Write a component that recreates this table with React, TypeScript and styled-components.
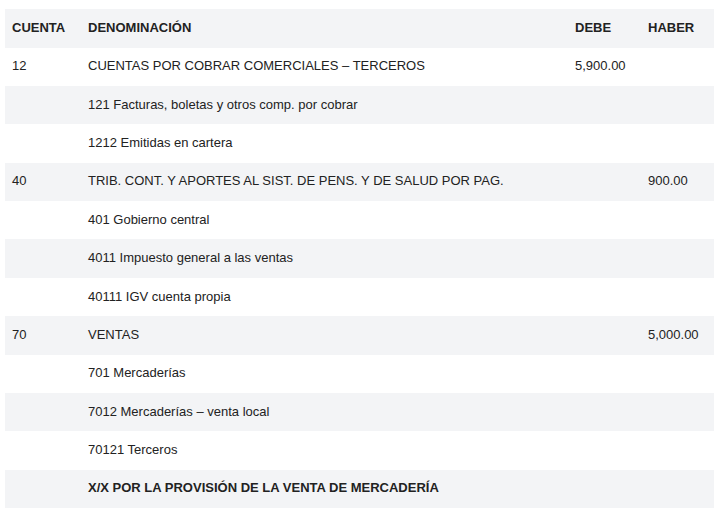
import React from 'react';
import styled, { createGlobalStyle } from 'styled-components';

/**
 * 분개 행 데이터
 */
interface Row {
  cuenta?: string;
  denominacion: string;
  debe?: string;
  haber?: string;
  bold?: boolean;
}

const rows: Row[] = [
  { cuenta: '12', denominacion: 'CUENTAS POR COBRAR COMERCIALES – TERCEROS', debe: '5,900.00' },
  { denominacion: '121 Facturas, boletas y otros comp. por cobrar' },
  { denominacion: '1212 Emitidas en cartera' },
  { cuenta: '40', denominacion: 'TRIB. CONT. Y APORTES AL SIST. DE PENS. Y DE SALUD POR PAG.', haber: '900.00' },
  { denominacion: '401 Gobierno central' },
  { denominacion: '4011 Impuesto general a las ventas' },
  { denominacion: '40111 IGV cuenta propia' },
  { cuenta: '70', denominacion: 'VENTAS', haber: '5,000.00' },
  { denominacion: '701 Mercaderías' },
  { denominacion: '7012 Mercaderías – venta local' },
  { denominacion: '70121 Terceros' },
  { denominacion: 'X/X POR LA PROVISIÓN DE LA VENTA DE MERCADERÍA', bold: true },
];

const App: React.FC = () => {
  return (
    <>
      <GlobalStyle />
      <Page>
        <Table>
          <colgroup>
            <col style={{ width: 76 }} />
            <col />
            <col style={{ width: 73 }} />
            <col style={{ width: 73 }} />
          </colgroup>
          <thead>
            <tr>
              <Th>CUENTA</Th>
              <Th>DENOMINACIÓN</Th>
              <Th>DEBE</Th>
              <Th>HABER</Th>
            </tr>
          </thead>
          <tbody>
            {rows.map((r, i) => (
              <BodyRow key={i}>
                <Td>{r.cuenta}</Td>
                <Td $bold={r.bold}>{r.denominacion}</Td>
                <Td>{r.debe}</Td>
                <Td>{r.haber}</Td>
              </BodyRow>
            ))}
          </tbody>
        </Table>
      </Page>
    </>
  );
};

/* ===================== 스타일 ===================== */

const GlobalStyle = createGlobalStyle`
  body {
    margin: 0;
    background: #ffffff;
    font-family: "Liberation Sans", Arial, sans-serif;
  }
`;

const Page = styled.div`
  padding: 9px 10px 0 5px;
`;

const Table = styled.table`
  width: 709px;
  border-collapse: collapse;
  table-layout: fixed;
  font-size: 13px;
  color: #222;

  thead tr {
    background: #f3f4f6;
  }
`;

const Th = styled.th`
  text-align: left;
  font-weight: 700;
  padding: 0 7px 2px;
  height: 36.5px;
  line-height: 15px;
`;

/* 짝수 번째 본문 행은 회색 줄무늬 */
const BodyRow = styled.tr`
  &:nth-child(even) {
    background: #f3f4f6;
  }
`;

const Td = styled.td<{ $bold?: boolean }>`
  padding: 0 7px 2px;
  height: 36.4px;
  line-height: 15px;
  font-weight: ${p => (p.$bold ? 700 : 400)};
  white-space: nowrap;
`;

export default App;
